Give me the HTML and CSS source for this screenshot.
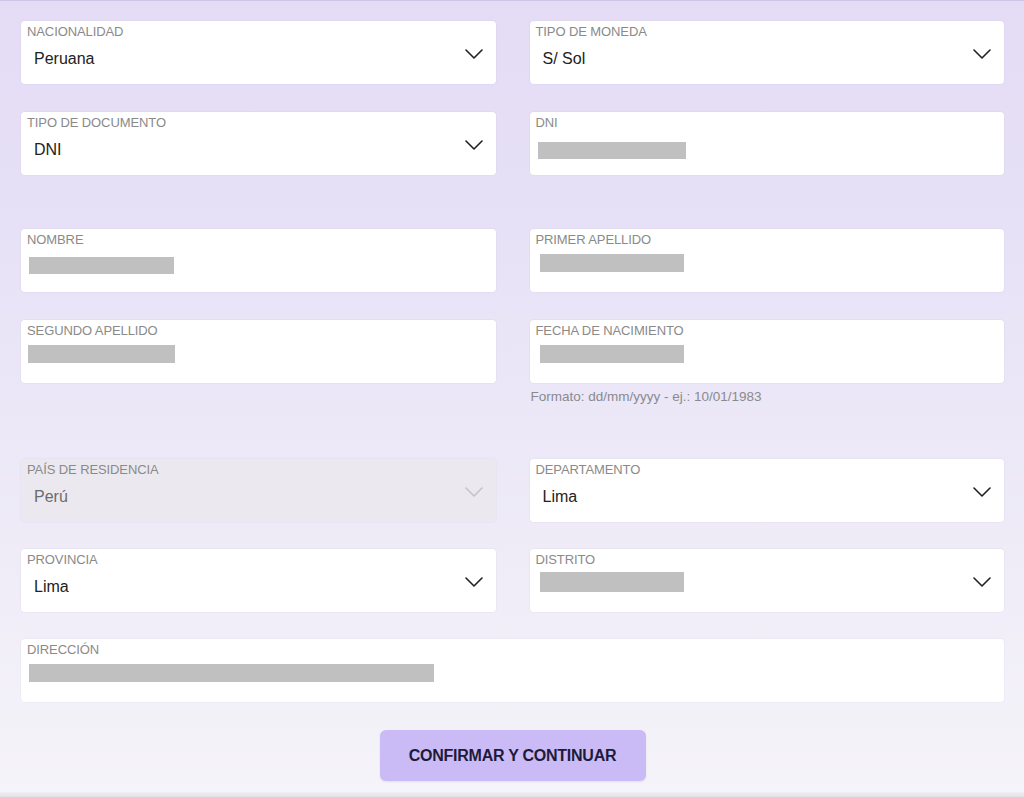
FILE: index.html
```html
<!DOCTYPE html>
<html lang="es">
<head>
<meta charset="utf-8">
<title>Datos personales</title>
<link rel="stylesheet" href="styles.css">
</head>
<body>
<div class="page">
  <form class="form">
    <div class="section">
      <div class="field select">
        <div class="field-body">
          <span class="label">NACIONALIDAD</span>
          <span class="value">Peruana</span>
        </div>
        <svg class="chevron" viewBox="0 0 18 10" width="18" height="10"><path d="M1 1 L9 9 L17 1" /></svg>
      </div>
      <div class="field select">
        <div class="field-body">
          <span class="label">TIPO DE MONEDA</span>
          <span class="value">S/ Sol</span>
        </div>
        <svg class="chevron" viewBox="0 0 18 10" width="18" height="10"><path d="M1 1 L9 9 L17 1" /></svg>
      </div>
      <div class="field select">
        <div class="field-body">
          <span class="label">TIPO DE DOCUMENTO</span>
          <span class="value">DNI</span>
        </div>
        <svg class="chevron" viewBox="0 0 18 10" width="18" height="10"><path d="M1 1 L9 9 L17 1" /></svg>
      </div>
      <div class="field">
        <div class="field-body">
          <span class="label">DNI</span>
          <span class="redact redact-low" style="width:148px"></span>
        </div>
      </div>
    </div>

    <div class="section">
      <div class="field">
        <div class="field-body">
          <span class="label">NOMBRE</span>
          <span class="redact redact-mid" style="width:145px"></span>
        </div>
      </div>
      <div class="field">
        <div class="field-body">
          <span class="label">PRIMER APELLIDO</span>
          <span class="redact redact-right" style="width:144px"></span>
        </div>
      </div>
      <div class="cell">
        <div class="field">
          <div class="field-body">
            <span class="label">SEGUNDO APELLIDO</span>
            <span class="redact redact-tight" style="width:147px"></span>
          </div>
        </div>
      </div>
      <div class="cell">
        <div class="field">
          <div class="field-body">
            <span class="label">FECHA DE NACIMIENTO</span>
            <span class="redact redact-right" style="width:144px"></span>
          </div>
        </div>
        <p class="helper">Formato: dd/mm/yyyy - ej.: 10/01/1983</p>
      </div>
    </div>

    <div class="section section-last">
      <div class="field select disabled">
        <div class="field-body">
          <span class="label">PAÍS DE RESIDENCIA</span>
          <span class="value">Perú</span>
        </div>
        <svg class="chevron" viewBox="0 0 18 10" width="18" height="10"><path d="M1 1 L9 9 L17 1" /></svg>
      </div>
      <div class="field select">
        <div class="field-body">
          <span class="label">DEPARTAMENTO</span>
          <span class="value">Lima</span>
        </div>
        <svg class="chevron" viewBox="0 0 18 10" width="18" height="10"><path d="M1 1 L9 9 L17 1" /></svg>
      </div>
      <div class="field select">
        <div class="field-body">
          <span class="label">PROVINCIA</span>
          <span class="value">Lima</span>
        </div>
        <svg class="chevron" viewBox="0 0 18 10" width="18" height="10"><path d="M1 1 L9 9 L17 1" /></svg>
      </div>
      <div class="field select">
        <div class="field-body">
          <span class="label">DISTRITO</span>
          <span class="redact redact-right redact-high" style="width:144px"></span>
        </div>
        <svg class="chevron" viewBox="0 0 18 10" width="18" height="10"><path d="M1 1 L9 9 L17 1" /></svg>
      </div>
      <div class="field wide">
        <div class="field-body">
          <span class="label">DIRECCIÓN</span>
          <span class="redact" style="width:405px"></span>
        </div>
      </div>
    </div>

    <div class="actions">
      <button type="button" class="btn-primary">CONFIRMAR Y CONTINUAR</button>
    </div>
  </form>
  <div class="bottom-edge"></div>
</div>
</body>
</html>
```

FILE: styles.css
```css
* {
  box-sizing: border-box;
}

html, body {
  margin: 0;
  padding: 0;
}

body {
  font-family: "Liberation Sans", Arial, Helvetica, sans-serif;
  background: #eee9f7;
}

.page {
  width: 1024px;
  height: 797px;
  overflow: hidden;
  border-top: 1px solid #cdc4ea;
  background: linear-gradient(180deg, #e4dcf5 0%, #e6e0f6 25%, #ebe7f7 50%, #f0edf8 75%, #f5f4f9 100%);
  display: flex;
  flex-direction: column;
}

.form {
  padding: 20px 20px 0 21px;
  flex: 1;
  display: flex;
  flex-direction: column;
}

.section {
  display: grid;
  grid-template-columns: 1fr 1fr;
  column-gap: 34px;
  row-gap: 28px;
  margin-bottom: 54px;
}

.section-last {
  row-gap: 27px;
  margin-bottom: 28px;
}

.cell {
  display: flex;
  flex-direction: column;
}

.field {
  height: 63px;
  background: #ffffff;
  border-radius: 4px;
  box-shadow: 0 0 0 1px rgba(120, 110, 150, 0.045);
  display: flex;
  align-items: center;
  padding: 0 13px 0 6px;
}

.field.wide {
  grid-column: 1 / -1;
}

.field-body {
  flex: 1;
  align-self: stretch;
  display: flex;
  flex-direction: column;
  align-items: flex-start;
  padding-top: 3px;
}

.label {
  font-size: 13px;
  line-height: 15px;
  color: #8a8a8a;
  letter-spacing: -0.1px;
}

.value {
  font-size: 16px;
  line-height: 20px;
  color: #222222;
  margin-top: 9.5px;
  padding-left: 7px;
}

.chevron {
  flex: none;
  margin-top: 3px;
  fill: none;
  stroke: #1f1f1f;
  stroke-width: 1.6;
  stroke-linecap: round;
  stroke-linejoin: round;
}

.disabled {
  background: #ebe9ef;
  box-shadow: 0 0 0 1px rgba(120, 110, 150, 0.04);
}

.disabled .value {
  color: #6b6b6b;
}

.disabled .chevron {
  stroke: #c4c2cc;
}

.redact {
  display: block;
  height: 18px;
  margin-top: 7px;
  margin-left: 2px;
  background: #c0c0c0;
}

.redact-low {
  margin-top: 12px;
  height: 17px;
}

.redact-mid {
  margin-top: 10px;
  height: 17px;
}

.redact-tight {
  margin-left: 1px;
}

.redact-right {
  margin-left: 4px;
}

.redact-high {
  margin-top: 5px;
  height: 20px;
}

.helper {
  margin: 6px 0 0 1px;
  font-size: 13.5px;
  line-height: 16px;
  color: #8a8a8e;
}

.actions {
  display: flex;
  justify-content: center;
}

.btn-primary {
  width: 266px;
  height: 51px;
  border: none;
  border-radius: 6px;
  background: #cabaf6;
  color: #1e1a3a;
  font-family: "Liberation Sans", Arial, Helvetica, sans-serif;
  font-weight: bold;
  font-size: 16px;
  letter-spacing: -0.25px;
  box-shadow: 0 1px 2px rgba(90, 70, 150, 0.12);
  cursor: pointer;
}

.bottom-edge {
  height: 5px;
  flex: none;
  background: linear-gradient(180deg, #efeef3 0%, #e2e1e6 100%);
}
```
